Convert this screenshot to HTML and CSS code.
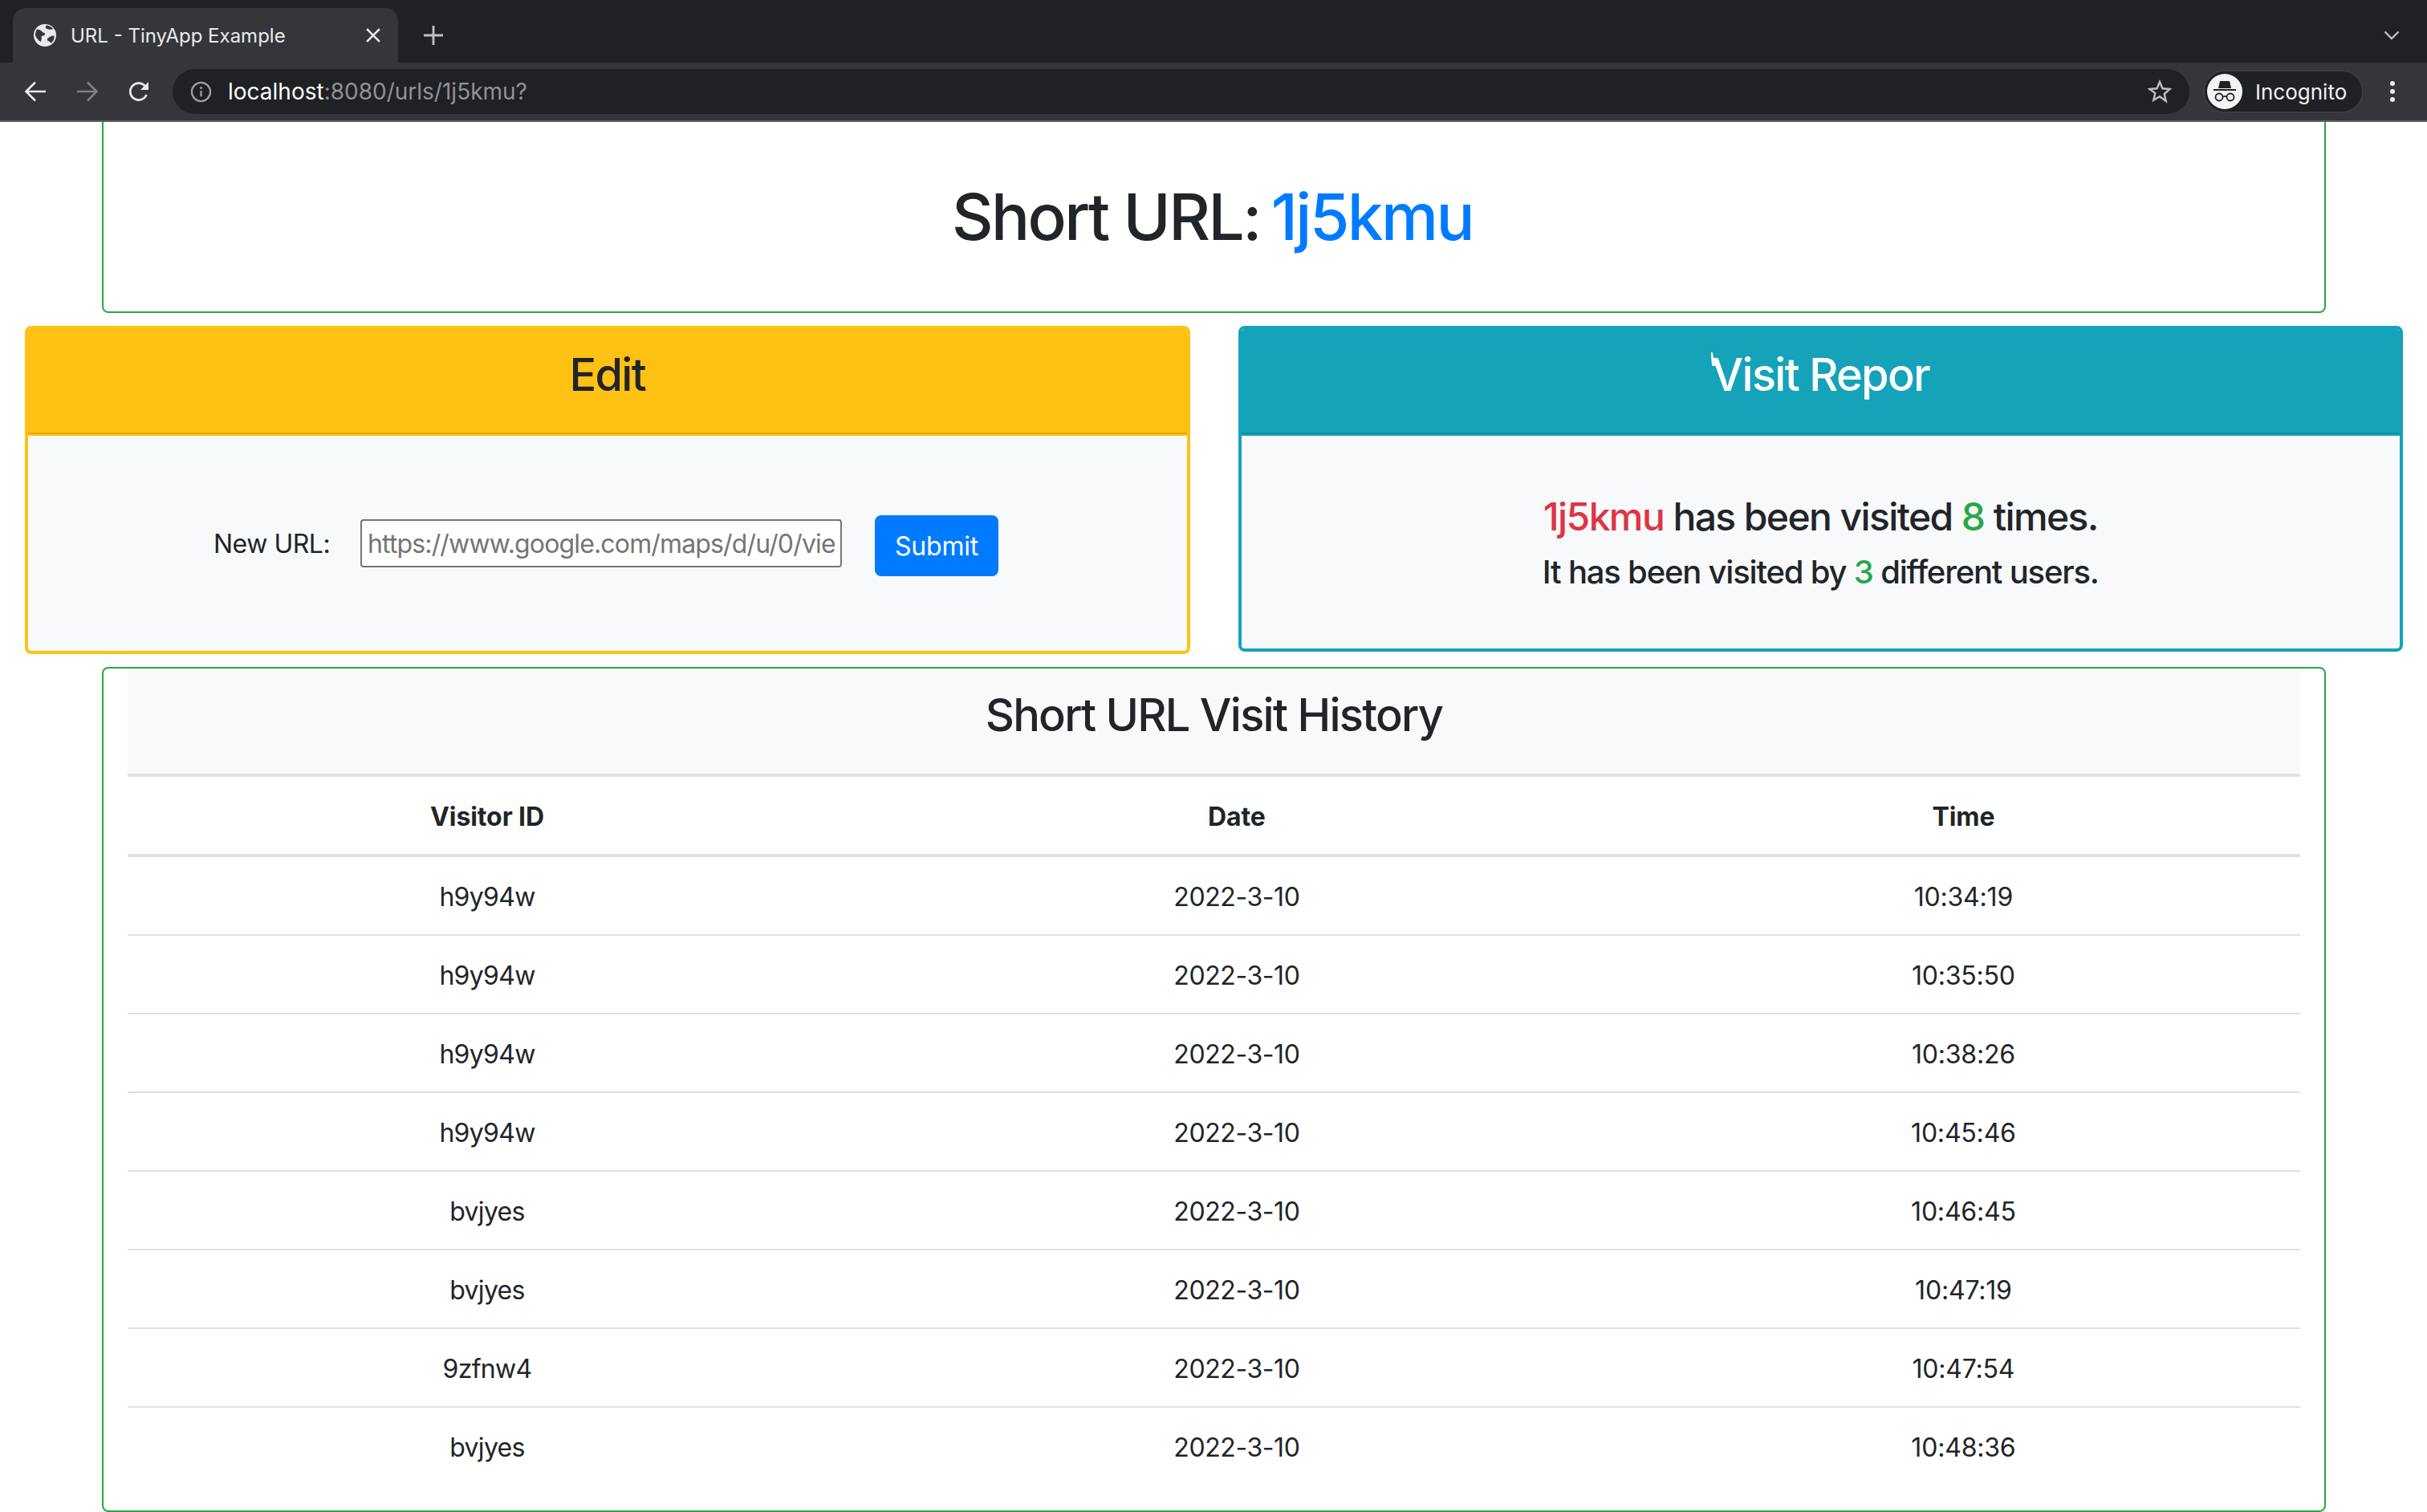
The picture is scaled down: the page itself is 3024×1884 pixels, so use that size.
FILE: index.html
```html
<!DOCTYPE html>
<html lang="en">
<head>
<meta charset="utf-8">
<title>URL - TinyApp Example</title>
<link rel="stylesheet" href="styles.css">
</head>
<body>
<header class="chrome">
  <div class="tabstrip">
    <div class="tab">
      <svg class="favicon" viewBox="0 0 28 28"><circle cx="14" cy="14" r="14" fill="#e8eaed"/><path d="M4 6.500c3 .2 5 1.200 6.500 3 1 1.200 3 1 3.500 2.500.4 1.500-1 2.500-2.500 2.500-1.800 0-2.200 1.500-1.800 3 .4 1.600-.2 3-1.200 4.500C5.500 20 2 16 2 13c0-2.500 1-4.800 2-6.500zM16 1.500c3 .3 6 2 8 4.500-1.500 1-3.500 1-5 .5-1.500-.4-3.500-.3-4-2-.2-1 .1-2.200 1-3zM25.500 14.500c.5 3.500-1 6.500-3.500 9-1.500-.6-2.500-2-4-2.500-1.300-.5-1.500-2.200-.5-3.200 1.500-1.500 5-3.800 8-3.300z" fill="#35363a"/></svg>
      <span class="tab-title">URL - TinyApp Example</span>
      <svg class="tab-close" viewBox="0 0 16 16"><path d="M1 1l14 14M15 1L1 15" stroke="#e8eaed" stroke-width="2.400"/></svg>
    </div>
    <svg class="newtab" viewBox="0 0 24 24"><path d="M12 0v24M0 12h24" stroke="#bdc1c6" stroke-width="2.800"/></svg>
    <svg class="tabs-menu" viewBox="0 0 20 12"><path d="M1.500 1.500L10 10l8.500-8.500" fill="none" stroke="#bdc1c6" stroke-width="2.400"/></svg>
  </div>
  <div class="toolbar">
    <svg class="nav-icon" viewBox="0 0 28 28"><path d="M27 14H3M14 2.500L2.500 14 14 25.500" fill="none" stroke="#e8eaed" stroke-width="2.600"/></svg>
    <svg class="nav-icon" viewBox="0 0 28 28"><path d="M1 14h24M14 2.500L25.500 14 14 25.500" fill="none" stroke="#7f8184" stroke-width="2.600"/></svg>
    <svg class="nav-icon" viewBox="0 0 28 28"><path d="M23.500 18a10.500 10.500 0 1 1-1.500-10.500" fill="none" stroke="#e8eaed" stroke-width="2.700"/><path d="M26 2v10H16z" fill="#e8eaed"/></svg>
    <div class="omnibox">
      <svg class="info" viewBox="0 0 28 28"><circle cx="14" cy="14" r="12" fill="none" stroke="#9aa0a6" stroke-width="2.400"/><path d="M14 12.500V20" stroke="#9aa0a6" stroke-width="2.400"/><circle cx="14" cy="8.800" r="1.600" fill="#9aa0a6"/></svg>
      <span class="url"><span class="host">localhost</span>:8080/urls/1j5kmu?</span>
      <svg class="star" viewBox="0 0 30 30"><path d="M15 3l3.500 8.300 9 .8-6.800 5.900 2 8.800L15 21.200 7.300 25.800l2-8.800L2.500 12.100l9-.8z" fill="none" stroke="#bdc1c6" stroke-width="2.400"/></svg>
    </div>
    <div class="profile">
      <svg class="avatar" viewBox="0 0 44 44"><circle cx="22" cy="22" r="22" fill="#f1f3f4"/><path d="M16 9h12l2 9H14zM8 19h28v2H8z" fill="#202124"/><circle cx="15" cy="29" r="4.500" fill="none" stroke="#202124" stroke-width="1.800"/><circle cx="29" cy="29" r="4.500" fill="none" stroke="#202124" stroke-width="1.800"/><path d="M19.500 28.500q2.500-1.200 5 0" fill="none" stroke="#202124" stroke-width="1.600"/></svg>
      <span class="profile-name">Incognito</span>
    </div>
    <svg class="kebab" viewBox="0 0 6 26"><circle cx="3" cy="3" r="3" fill="#e8eaed"/><circle cx="3" cy="13" r="3" fill="#e8eaed"/><circle cx="3" cy="23" r="3" fill="#e8eaed"/></svg>
  </div>
</header>
<main class="page">
  <section class="title-card">
    <h1 class="title">Short URL: <a class="link">1j5kmu</a></h1>
  </section>
  <div class="panels">
    <section class="panel panel-edit">
      <h3 class="panel-head">Edit</h3>
      <div class="panel-body">
        <form class="edit-form">
          <label class="edit-label" for="u">New URL:</label>
          <input class="edit-input" id="u" type="text" placeholder="https://www.google.com/maps/d/u/0/viewer?mid=1">
          <button class="edit-btn" type="button">Submit</button>
        </form>
      </div>
    </section>
    <section class="panel panel-report">
      <h3 class="panel-head"><span class="report-title">Visit Repor</span></h3>
      <div class="panel-body report-body">
        <h4 class="report-a"><span class="red">1j5kmu</span> has been visited <span class="green">8</span> times.</h4>
        <h5 class="report-b">It has been visited by <span class="green">3</span> different users.</h5>
      </div>
    </section>
  </div>
  <section class="history">
    <h3 class="history-head">Short URL Visit History</h3>
    <table class="history-table">
      <colgroup><col class="c1"><col class="c2"><col class="c3"></colgroup>
      <thead><tr><th>Visitor ID</th><th>Date</th><th>Time</th></tr></thead>
      <tbody>
        <tr><td>h9y94w</td><td>2022-3-10</td><td>10:34:19</td></tr>
        <tr><td>h9y94w</td><td>2022-3-10</td><td>10:35:50</td></tr>
        <tr><td>h9y94w</td><td>2022-3-10</td><td>10:38:26</td></tr>
        <tr><td>h9y94w</td><td>2022-3-10</td><td>10:45:46</td></tr>
        <tr><td>bvjyes</td><td>2022-3-10</td><td>10:46:45</td></tr>
        <tr><td>bvjyes</td><td>2022-3-10</td><td>10:47:19</td></tr>
        <tr><td>9zfnw4</td><td>2022-3-10</td><td>10:47:54</td></tr>
        <tr><td>bvjyes</td><td>2022-3-10</td><td>10:48:36</td></tr>
      </tbody>
    </table>
  </section>
</main>
</body>
</html>
```
FILE: styles.css
```css
* { box-sizing: border-box; }
html, body { margin: 0; padding: 0; }
body {
  width: 3024px; height: 1884px; overflow: hidden; background: #fff;
  color: #212529; font-family: Inter, "Liberation Sans", sans-serif; font-size: 32px;
}
h1, h3, h4, h5 { margin: 0; font-weight: 500; }

/* browser chrome */
.chrome { height: 152px; background: #35363a; border-bottom: 2px solid #5f6368; }
.tabstrip { height: 78px; background: #202124; display: flex; align-items: center; padding: 10px 34px 0 16px; }
.tab {
  width: 480px; height: 68px; background: #35363a; border-radius: 16px 16px 0 0;
  display: flex; align-items: center; padding: 0 22px 0 26px; align-self: flex-end;
}
.favicon { width: 28px; height: 28px; }
.tab-title { margin-left: 18px; font-size: 24px; color: #e8eaed; flex: 1; white-space: nowrap; }
.tab-close { width: 18px; height: 18px; }
.newtab { width: 24px; height: 24px; margin-left: 32px; }
.tabs-menu { width: 20px; height: 12px; margin-left: auto; }
.toolbar { height: 72px; display: flex; align-items: center; padding: 0 0 0 30px; }
.nav-icon { width: 28px; height: 28px; margin-right: 37px; }
.nav-icon:nth-child(2) { margin-right: 36px; }
.nav-icon:nth-child(3) { margin-right: 28px; }
.omnibox {
  width: 2513px; height: 56px; border-radius: 28px; background: #202124;
  display: flex; align-items: center; padding: 0 22px;
}
.info { width: 27px; height: 27px; }
.url { margin-left: 20px; font-size: 28px; color: #8f9296; flex: 1; }
.host { color: #fff; }
.star { width: 30px; height: 30px; }
.profile {
  width: 200px; height: 54px; margin-left: 17px; border-radius: 27px; background: #202124;
  border: 2px solid #3c3d41; display: flex; align-items: center; padding-left: 3px;
}
.avatar { width: 44px; height: 44px; }
.profile-name { margin-left: 16px; font-size: 26px; color: #f1f3f4; }
.kebab { width: 6px; height: 26px; margin-left: 33px; }

/* page */
.title-card {
  margin: 0 126px 0 127px; height: 238px; border: 2px solid #28a745; border-top: 0;
  border-radius: 0 0 8px 8px; display: flex; align-items: center; justify-content: center; padding-right: 4px;
}
.title { font-size: 80px; line-height: 96px; letter-spacing: -2.55px; }
.link { color: #007bff; margin-left: -5px; }
.panels { display: flex; align-items: flex-start; gap: 60px; margin: 16px 30px 0 31px; }
.panel { flex: 1; border: 4px solid; border-radius: 8px; background: #f8f9fa; overflow: hidden; }
.panel-edit { border-color: #ffc114; height: 409px; }
.panel-report { border-color: #14a3b9; height: 406px; }
.panel-head {
  height: 131px; border-bottom: 2px solid rgba(0,0,0,.125); text-align: center;
  font-size: 56px; line-height: 67px; padding-top: 24px; margin: 0 -4px 2px; letter-spacing: -1.75px;
}
.panel-edit .panel-head { background: #ffc114; box-shadow: 0 2px 0 #ffc114; }
.panel-report .panel-head { background: #14a3b9; color: #fff; box-shadow: 0 2px 0 #14a3b9; }
.panel-body { background: #f8f9fa; }
.report-title { position: relative; }
.report-title::before {
  content: ""; position: absolute; left: -1px; top: 6px; width: 6px; height: 17px; background: #fff;
  clip-path: polygon(0 0, 35% 0, 100% 100%, 25% 100%);
}
.edit-form { display: flex; align-items: center; padding: 93px 0 0 231px; }
.edit-label { width: 183px; font-size: 32px; letter-spacing: -.5px; }
.edit-input {
  width: 600px; height: 60px; border: 2px solid #767676; border-radius: 4px; background: #fff;
  font: 32px Inter, "Liberation Sans", sans-serif; padding: 0 7px; letter-spacing: -.85px;
}
.edit-input::placeholder { color: #757575; opacity: 1; }
.edit-btn {
  margin: 6px 0 0 41px; width: 154px; height: 76px; border: 0; border-radius: 8px; background: #007bff; color: #fff;
  font: 32px Inter, "Liberation Sans", sans-serif; letter-spacing: -.2px;
}
.report-body { text-align: center; padding-top: 72px; }
.report-a { font-size: 48px; line-height: 58px; letter-spacing: -1.6px; }
.report-b { font-size: 40px; line-height: 48px; margin-top: 16px; letter-spacing: -1.2px; }
.red { color: #dc3545; }
.green { color: #28a745; }
.history {
  margin: 16px 126px 0 127px; height: 1053px; border: 2px solid #28a745; border-radius: 8px; padding: 0 30px;
}
.history-head {
  height: 131px; background: #f8f9fa; text-align: center; font-size: 56px; line-height: 67px; padding-top: 25px; letter-spacing: -1.75px;
}
.history-table { width: 100%; border-collapse: collapse; table-layout: fixed; text-align: center; }
.c1 { width: 33.1%; }
.c2 { width: 35.9%; }
.c3 { width: 31%; }
.history-table th, .history-table td { padding: 26px 24px 22px; line-height: 48px; border-top: 2px solid #dee2e6; font-size: 32px; letter-spacing: -.4px; }
.history-table td:first-child { letter-spacing: -.7px; }
.history-table td:last-child { letter-spacing: -.2px; }
.history-table th { font-weight: 700; border-top-width: 4px; border-bottom: 4px solid #dee2e6; letter-spacing: -.1px; }
```
